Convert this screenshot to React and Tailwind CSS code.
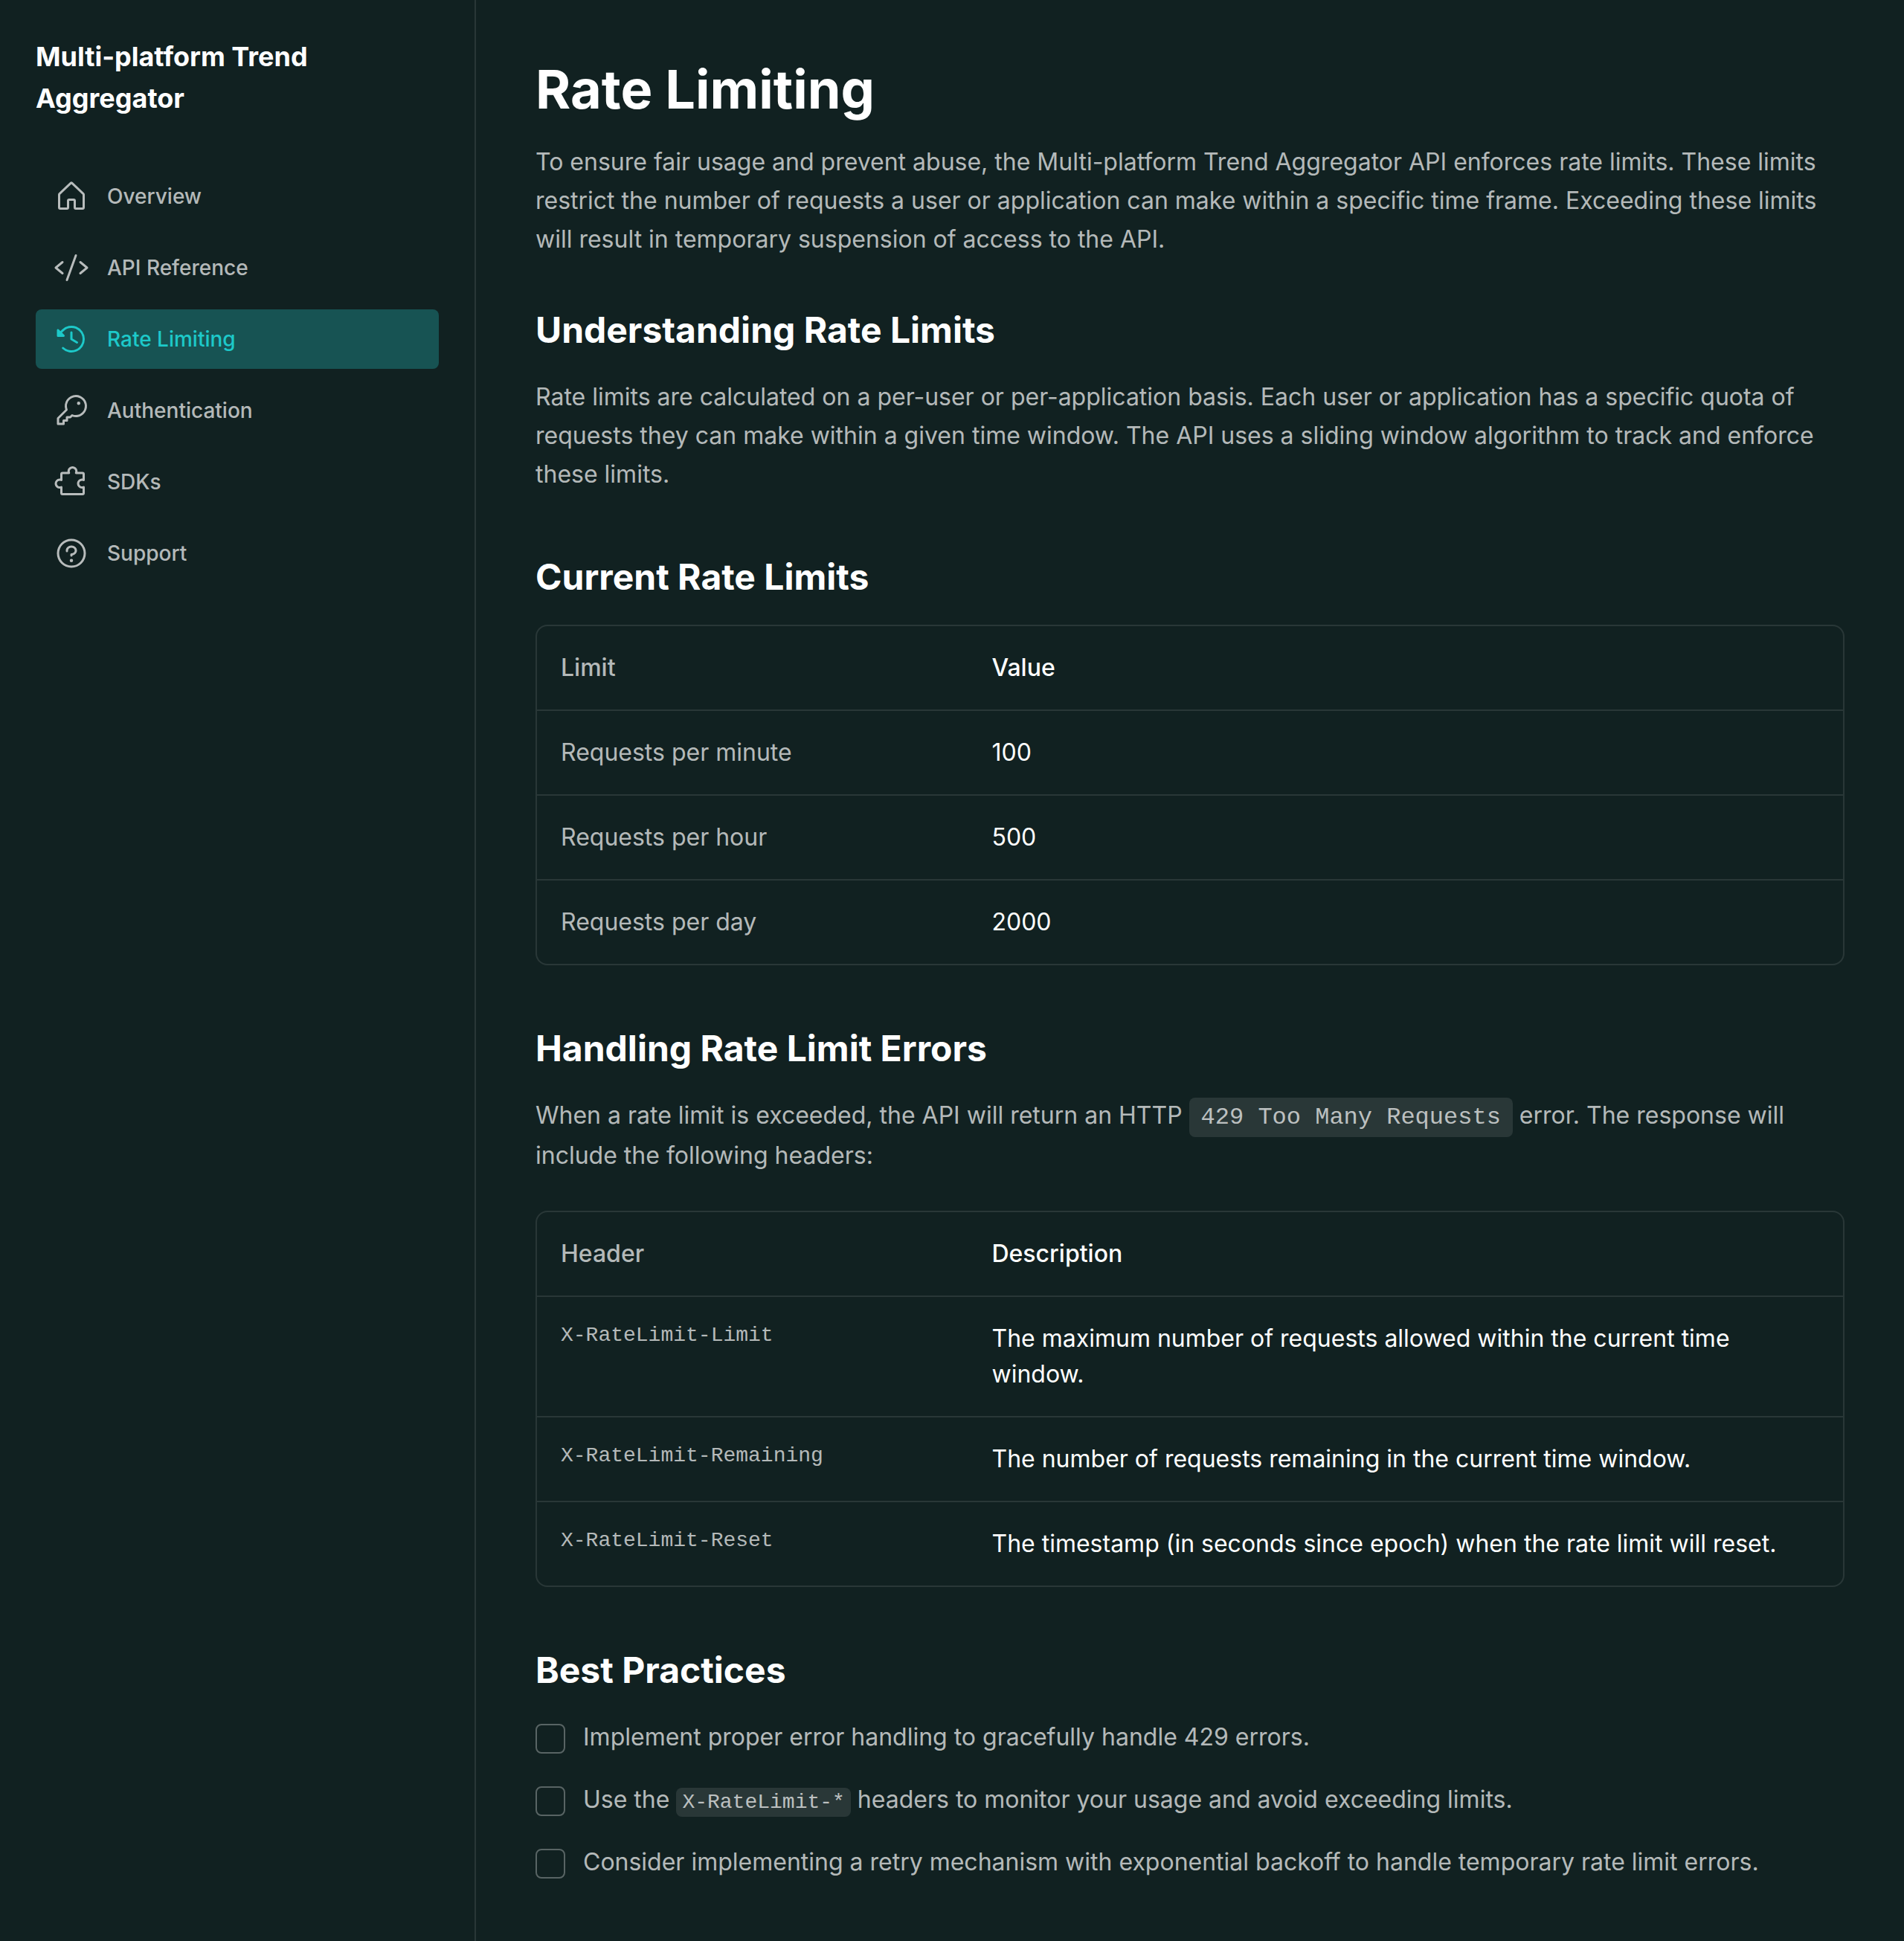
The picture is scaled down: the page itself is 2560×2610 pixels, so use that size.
import React from "react";
import { PiCode, PiPuzzlePiece, PiQuestion } from "react-icons/pi";

function HouseIcon(props) {
  return (
    <svg viewBox="0 0 256 256" fill="currentColor" {...props}>
      <path d="M218.83,103.77l-80-75.48a1.14,1.14,0,0,1-.11-.11,16,16,0,0,0-21.53,0l-.11.11L37.17,103.77A16,16,0,0,0,32,115.55V208a16,16,0,0,0,16,16H96a16,16,0,0,0,16-16V160h32v48a16,16,0,0,0,16,16h48a16,16,0,0,0,16-16V115.55A16,16,0,0,0,218.83,103.77ZM208,208H160V160a16,16,0,0,0-16-16H112a16,16,0,0,0-16,16v48H48V115.55l.11-.1L128,40l79.9,75.43.11.1Z" />
    </svg>
  );
}

function HistoryIcon(props) {
  return (
    <svg viewBox="0 0 256 256" fill="currentColor" {...props}>
      <path d="M136,80v43.47l36.12,21.67a8,8,0,0,1-8.24,13.72l-40-24A8,8,0,0,1,120,128V80a8,8,0,0,1,16,0Z" />
      <path d="M224,128A96,96,0,0,1,62.11,197.82a8,8,0,1,1,11-11.64A80,80,0,1,0,71.43,71.43L60.63,81.29L77.66,98.34A8,8,0,0,1,72,112H32a8,8,0,0,1-8-8V64a8,8,0,0,1,13.66-5.66L49.3,70L60.06,60.2A96,96,0,0,1,224,128Z" />
    </svg>
  );
}

function KeyIcon(props) {
  return (
    <svg viewBox="0 0 256 256" fill="currentColor" {...props}>
      <path d="M160,16A80.07,80.07,0,0,0,83.91,120.78L26.34,178.34A8,8,0,0,0,24,184v40a8,8,0,0,0,8,8H72a8,8,0,0,0,8-8V208H96a8,8,0,0,0,8-8V184h16a8,8,0,0,0,5.66-2.34l9.56-9.57A80,80,0,1,0,160,16Zm0,144a63.7,63.7,0,0,1-23.65-4.51,8,8,0,0,0-8.84,1.68L116.69,168H96a8,8,0,0,0-8,8v16H72a8,8,0,0,0-8,8v16H40V187.31l58.83-58.82a8,8,0,0,0,1.68-8.84A63.72,63.72,0,0,1,96,96a64,64,0,1,1,64,64Zm32-84a12,12,0,1,1-12-12A12,12,0,0,1,192,76Z" />
    </svg>
  );
}

const NAV = [
  { label: "Overview", Icon: HouseIcon },
  { label: "API Reference", Icon: PiCode },
  { label: "Rate Limiting", Icon: HistoryIcon, active: true },
  { label: "Authentication", Icon: KeyIcon },
  { label: "SDKs", Icon: PiPuzzlePiece },
  { label: "Support", Icon: PiQuestion },
];

const LIMITS = [
  ["Requests per minute", "100"],
  ["Requests per hour", "500"],
  ["Requests per day", "2000"],
];

const HEADERS = [
  ["X-RateLimit-Limit", "The maximum number of requests allowed within the current time window."],
  ["X-RateLimit-Remaining", "The number of requests remaining in the current time window."],
  ["X-RateLimit-Reset", "The timestamp (in seconds since epoch) when the rate limit will reset."],
];

const PRACTICES = [
  "Implement proper error handling to gracefully handle 429 errors.",
  <>
    Use the{" "}
    <code className="rounded-lg bg-white/10 px-2 py-1 font-['Liberation_Mono',monospace] text-[28px] leading-10">X-RateLimit-*</code>{" "}
    headers to monitor your usage and avoid exceeding limits.
  </>,
  "Consider implementing a retry mechanism with exponential backoff to handle temporary rate limit errors.",
];

function Sidebar() {
  return (
    <aside className="flex w-[640px] shrink-0 flex-col gap-16 border-r-2 border-white/10 p-12">
      <p className="text-[36px] leading-14 font-bold text-white">Multi-platform Trend Aggregator</p>
      <nav className="flex flex-col gap-4">
        {NAV.map(({ label, Icon, active }) => (
          <a
            key={label}
            href="#"
            aria-current={active ? "page" : undefined}
            className={
              active
                ? "flex h-20 items-center gap-6 rounded-lg bg-[#175353] px-6 text-[#1dc9c9]"
                : "flex h-20 items-center gap-6 rounded-lg px-6"
            }
          >
            <Icon className="size-12 shrink-0" aria-hidden="true" />
            <span className="text-[28px] leading-10 font-medium">{label}</span>
          </a>
        ))}
      </nav>
    </aside>
  );
}

function DataTable({ head, rows, mono }) {
  return (
    <div className="overflow-hidden rounded-2xl border-2 border-white/10">
      <table className="w-full table-fixed text-left leading-12">
        <thead>
          <tr>
            <th scope="col" className="w-[33%] p-8 font-medium">{head[0]}</th>
            <th scope="col" className="p-8 font-medium text-white">{head[1]}</th>
          </tr>
        </thead>
        <tbody>
          {rows.map(([name, value]) => (
            <tr key={name} className="border-t-2 border-white/10">
              <td
                className={
                  mono
                    ? "p-8 align-top font-['Liberation_Mono',monospace] text-[28px] leading-10"
                    : "p-8 align-top"
                }
              >
                {name}
              </td>
              <td className="p-8 align-top text-white">{value}</td>
            </tr>
          ))}
        </tbody>
      </table>
    </div>
  );
}

function Section({ title, children }) {
  return (
    <section className="mt-20">
      <h2 className="mb-8 text-[48px] leading-16 font-bold text-white">{title}</h2>
      {children}
    </section>
  );
}

export default function App() {
  return (
    <div className="flex min-h-screen bg-[#112121] font-['Inter',sans-serif] text-[32px] leading-[52px] text-white/70">
      <Sidebar />
      <main className="min-w-0 flex-1 p-20">
        <h1 className="mb-8 text-[72px] leading-20 font-bold text-white">Rate Limiting</h1>
        <p>
          To ensure fair usage and prevent abuse, the Multi-platform Trend Aggregator API enforces rate limits. These
          limits restrict the number of requests a user or application can make within a specific time frame. Exceeding
          these limits will result in temporary suspension of access to the API.
        </p>
        <section className="mt-16">
          <h2 className="mb-8 text-[48px] leading-16 font-bold text-white">Understanding Rate Limits</h2>
          <p>
            Rate limits are calculated on a per-user or per-application basis. Each user or application has a specific
            quota of requests they can make within a given time window. The API uses a sliding window algorithm to track
            and enforce these limits.
          </p>
        </section>
        <Section title="Current Rate Limits">
          <DataTable head={["Limit", "Value"]} rows={LIMITS} />
        </Section>
        <Section title="Handling Rate Limit Errors">
          <p className="mb-12">
            When a rate limit is exceeded, the API will return an HTTP{" "}
            <code className="rounded-lg bg-white/10 px-4 py-2 font-['Liberation_Mono',monospace] leading-[50px]">
              429 Too Many Requests
            </code>{" "}
            error. The response will include the following headers:
          </p>
          <DataTable head={["Header", "Description"]} rows={HEADERS} mono />
        </Section>
        <Section title="Best Practices">
          <ul className="flex flex-col gap-8">
            {PRACTICES.map((text, i) => (
              <li key={i}>
                <label className="flex items-start gap-6">
                  <input
                    type="checkbox"
                    className="mt-2 size-10 shrink-0 appearance-none rounded-lg border-2 border-white/30 checked:bg-[#1dc9c9]"
                  />
                  <span>{text}</span>
                </label>
              </li>
            ))}
          </ul>
        </Section>
      </main>
    </div>
  );
}
